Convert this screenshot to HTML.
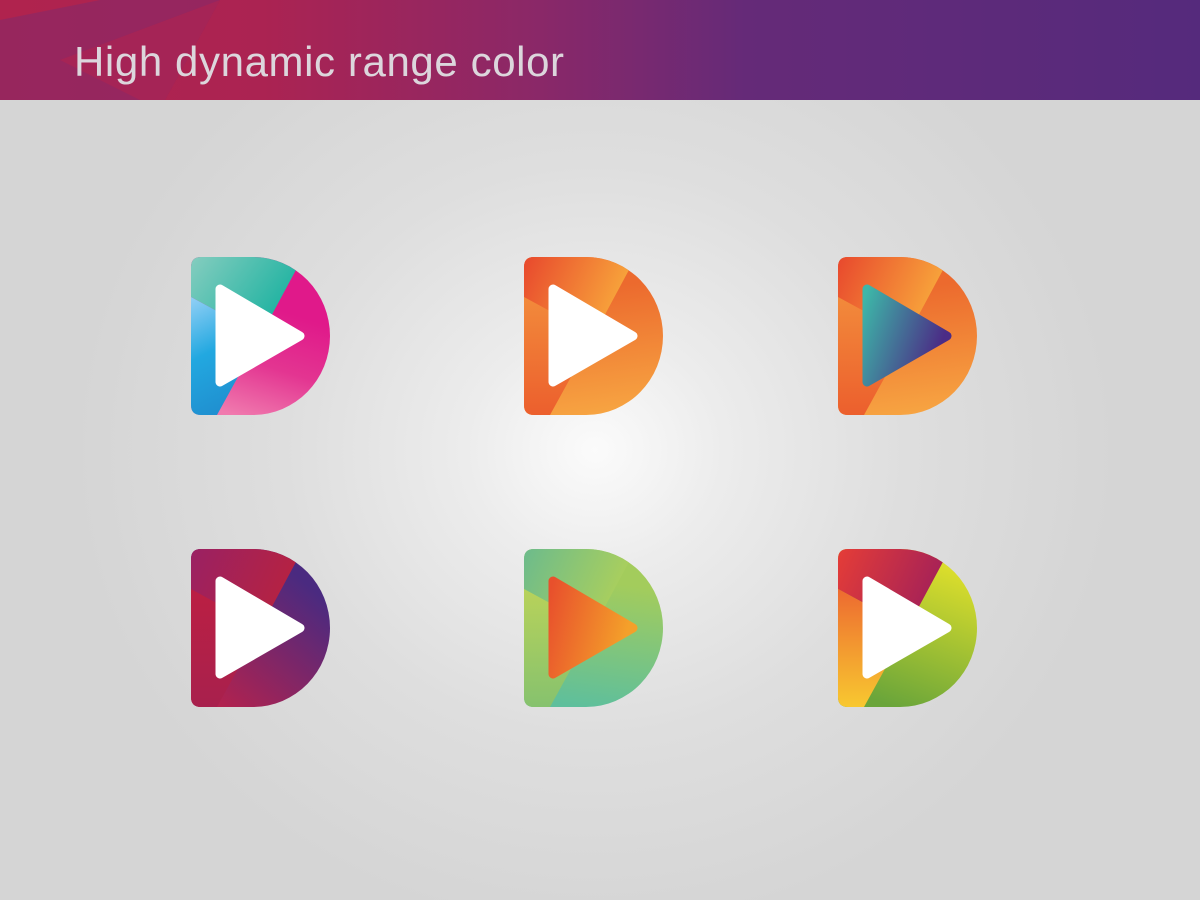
<!DOCTYPE html>
<html><head><meta charset="utf-8"><style>
html,body{margin:0;padding:0;width:1200px;height:900px;overflow:hidden}
body{background:radial-gradient(ellipse 520px 480px at 595px 450px,#fbfbfb 0%,#ececec 25%,#dedede 60%,#d5d5d5 100%);position:relative;font-family:"Liberation Sans",sans-serif}
.hdr{position:absolute;left:0;top:0;width:1200px;height:100px;background:linear-gradient(90deg,#b0234e 0%,#ab2352 22%,#8a2868 45%,#652a78 62%,#552a7c 100%);overflow:hidden}
.hdr h1{position:absolute;left:74px;top:38px;margin:0;font-weight:normal;font-size:42px;line-height:48px;color:#dcd6dc;letter-spacing:0.6px}
svg.ic{position:absolute;width:140px;height:158px}
</style></head><body>
<div class="hdr">
<svg width="1200" height="100" style="position:absolute;left:0;top:0">
<polygon points="100,0 220,0 165,100 0,100 0,20" fill="#7a2a70" opacity="0.45"/>
<polygon points="220,0 165,100 140,100 60,60 140,30" fill="#b2234f" opacity="0.55"/>
</svg>
<h1>High dynamic range color</h1>
</div>
<svg width="0" height="0" style="position:absolute">
<defs>
<clipPath id="D"><path d="M10,0 H62 A77,79 0 0 1 62,158 H10 Q0,158 0,148 V10 Q0,0 10,0 Z"/></clipPath>
<linearGradient id="a1" x1="0" y1="0" x2="1" y2="0.5"><stop offset="0" stop-color="#85cdbf"/><stop offset="1" stop-color="#14b09e"/></linearGradient>
<linearGradient id="b1" x1="0" y1="0" x2="0.3" y2="1"><stop offset="0" stop-color="#93d0f6"/><stop offset="0.5" stop-color="#22a8e0"/><stop offset="1" stop-color="#2090d0"/></linearGradient>
<linearGradient id="c1" x1="0.5" y1="0.3" x2="0.3" y2="1"><stop offset="0" stop-color="#e0198a"/><stop offset="0.5" stop-color="#e33591"/><stop offset="1" stop-color="#f07aae"/></linearGradient>
<linearGradient id="a2" x1="0" y1="0" x2="1" y2="0.3"><stop offset="0" stop-color="#e8482d"/><stop offset="1" stop-color="#f9ad3c"/></linearGradient>
<linearGradient id="b2" x1="0" y1="0" x2="0" y2="1"><stop offset="0" stop-color="#f28a3b"/><stop offset="1" stop-color="#ec5f2d"/></linearGradient>
<linearGradient id="c2" x1="0.5" y1="0.2" x2="0.6" y2="1"><stop offset="0" stop-color="#ec6a2e"/><stop offset="1" stop-color="#f7a542"/></linearGradient>
<linearGradient id="t3" x1="0" y1="0" x2="1" y2="0.4"><stop offset="0" stop-color="#3db7a8"/><stop offset="1" stop-color="#4b2c86"/></linearGradient>
<linearGradient id="a4" x1="0" y1="0" x2="1" y2="0.3"><stop offset="0" stop-color="#9a2163"/><stop offset="1" stop-color="#b8223f"/></linearGradient>
<linearGradient id="b4" x1="0" y1="0" x2="0" y2="1"><stop offset="0" stop-color="#bb1f43"/><stop offset="1" stop-color="#a8204d"/></linearGradient>
<linearGradient id="c4" x1="0.8" y1="0.2" x2="0.2" y2="1"><stop offset="0" stop-color="#4a2a80"/><stop offset="1" stop-color="#b3224e"/></linearGradient>
<linearGradient id="a5" x1="0" y1="0" x2="1" y2="0.3"><stop offset="0" stop-color="#6cbb8c"/><stop offset="1" stop-color="#b0d158"/></linearGradient>
<linearGradient id="b5" x1="0" y1="0" x2="0" y2="1"><stop offset="0" stop-color="#b8d25a"/><stop offset="1" stop-color="#86c26e"/></linearGradient>
<linearGradient id="c5" x1="0.5" y1="0.2" x2="0.4" y2="1"><stop offset="0" stop-color="#a3cc5c"/><stop offset="1" stop-color="#5ebf9c"/></linearGradient>
<linearGradient id="t5" x1="0" y1="0" x2="1" y2="0.3"><stop offset="0" stop-color="#e8502c"/><stop offset="1" stop-color="#f4a02a"/></linearGradient>
<linearGradient id="a6" x1="0" y1="0" x2="1" y2="0.3"><stop offset="0" stop-color="#e53d37"/><stop offset="1" stop-color="#a01f5a"/></linearGradient>
<linearGradient id="b6" x1="0" y1="0" x2="0" y2="1"><stop offset="0" stop-color="#ed6a30"/><stop offset="1" stop-color="#f8c830"/></linearGradient>
<linearGradient id="c6" x1="0.7" y1="0.1" x2="0.4" y2="1"><stop offset="0" stop-color="#dadd2c"/><stop offset="1" stop-color="#6aa53a"/></linearGradient>
</defs></svg>

<svg class="ic" style="left:191px;top:257px" viewBox="0 0 140 158"><g clip-path="url(#D)">
<rect width="140" height="158" fill="url(#c1)"/>
<polygon points="0,0 115,0 106,11 70,78 0,40" fill="url(#a1)"/>
<polygon points="0,40 70,78 26,158 0,158" fill="url(#b1)"/></g>
<polygon points="29,32 109,79 29,125" fill="#fff" stroke="#fff" stroke-width="9" stroke-linejoin="round"/></svg>

<svg class="ic" style="left:524px;top:257px" viewBox="0 0 140 158"><g clip-path="url(#D)">
<rect width="140" height="158" fill="url(#c2)"/>
<polygon points="0,0 115,0 106,11 70,78 0,40" fill="url(#a2)"/>
<polygon points="0,40 70,78 26,158 0,158" fill="url(#b2)"/></g>
<polygon points="29,32 109,79 29,125" fill="#fff" stroke="#fff" stroke-width="9" stroke-linejoin="round"/></svg>

<svg class="ic" style="left:838px;top:257px" viewBox="0 0 140 158"><g clip-path="url(#D)">
<rect width="140" height="158" fill="url(#c2)"/>
<polygon points="0,0 115,0 106,11 70,78 0,40" fill="url(#a2)"/>
<polygon points="0,40 70,78 26,158 0,158" fill="url(#b2)"/></g>
<polygon points="29,32 109,79 29,125" fill="url(#t3)" stroke="url(#t3)" stroke-width="9" stroke-linejoin="round"/></svg>

<svg class="ic" style="left:191px;top:549px" viewBox="0 0 140 158"><g clip-path="url(#D)">
<rect width="140" height="158" fill="url(#c4)"/>
<polygon points="0,0 115,0 106,11 70,78 0,40" fill="url(#a4)"/>
<polygon points="0,40 70,78 26,158 0,158" fill="url(#b4)"/></g>
<polygon points="29,32 109,79 29,125" fill="#fff" stroke="#fff" stroke-width="9" stroke-linejoin="round"/></svg>

<svg class="ic" style="left:524px;top:549px" viewBox="0 0 140 158"><g clip-path="url(#D)">
<rect width="140" height="158" fill="url(#c5)"/>
<polygon points="0,0 115,0 106,11 70,78 0,40" fill="url(#a5)"/>
<polygon points="0,40 70,78 26,158 0,158" fill="url(#b5)"/></g>
<polygon points="29,32 109,79 29,125" fill="url(#t5)" stroke="url(#t5)" stroke-width="9" stroke-linejoin="round"/></svg>

<svg class="ic" style="left:838px;top:549px" viewBox="0 0 140 158"><g clip-path="url(#D)">
<rect width="140" height="158" fill="url(#c6)"/>
<polygon points="0,0 115,0 106,11 70,78 0,40" fill="url(#a6)"/>
<polygon points="0,40 70,78 26,158 0,158" fill="url(#b6)"/></g>
<polygon points="29,32 109,79 29,125" fill="#fff" stroke="#fff" stroke-width="9" stroke-linejoin="round"/></svg>
</body></html>
